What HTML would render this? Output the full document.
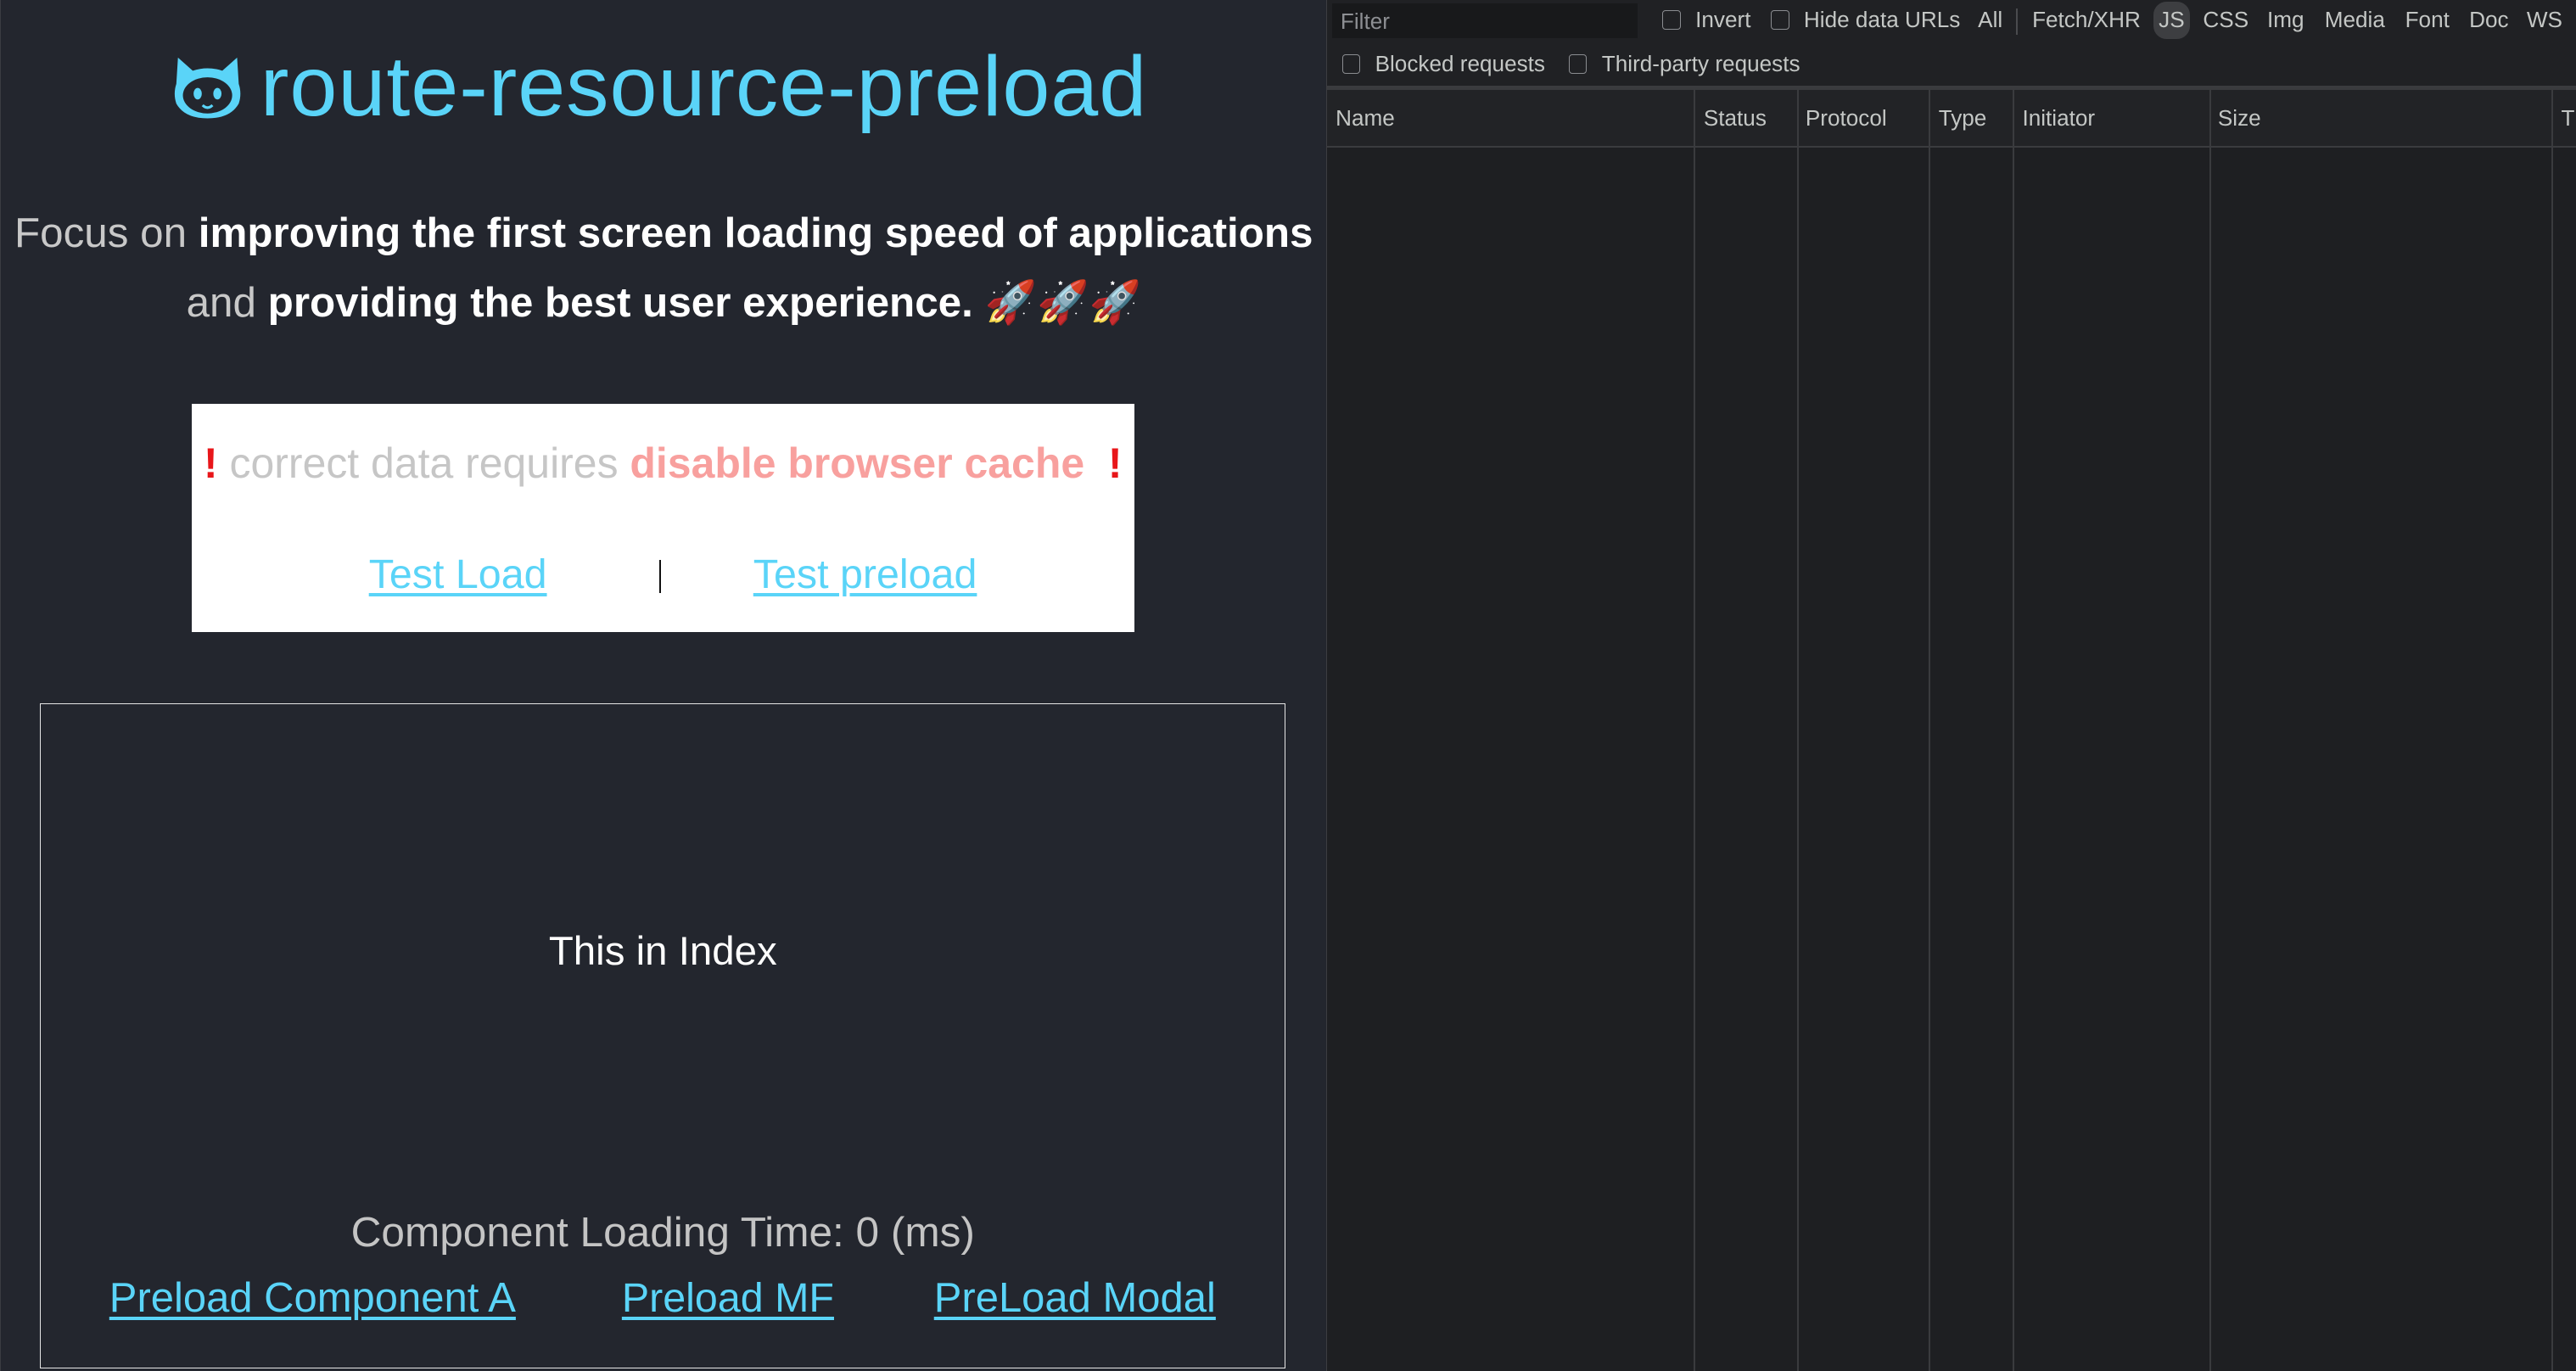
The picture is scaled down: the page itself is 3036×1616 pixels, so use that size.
<!DOCTYPE html>
<html><head><meta charset="utf-8"><style>
html,body{margin:0;padding:0;width:3036px;height:1616px;overflow:hidden;background:#202124}
#z{zoom:1.9362;width:1568px;height:835px;position:relative;font-family:"Liberation Sans",sans-serif}
.a{position:absolute;white-space:nowrap}
#left{position:absolute;left:0;top:0;width:807px;height:835px;background:#23262e;border-left:1px solid #3a3c42;box-sizing:border-box}
#div{position:absolute;left:807px;top:0;width:1px;height:835px;background:#3c3d41}
#right{position:absolute;left:808px;top:0;width:760px;height:835px;background:#202124}
.link{color:#5ad4f8;text-decoration:underline;text-decoration-thickness:2px;text-underline-offset:3px}
.dt{color:#c4c7c5;font-size:13.5px}
.cb{position:absolute;width:10px;height:11px;border:1px solid #8a8c90;border-radius:2px}
.vl{position:absolute;top:55px;width:1px;height:780px;background:#3a3b3e}
</style></head><body><div id="z">
<div id="left">
  <svg class="a" style="left:104px;top:33px" width="45" height="40" viewBox="0 0 45 40">
    <path d="M4 2 L13 10 Q22 7 31 10 L40 2 L41 18 Q43 24 41 30 Q36 39 22 39 Q8 39 3 30 Q1 24 3 18 Z" fill="#5ad4f8"/>
    <ellipse cx="22" cy="25" rx="15" ry="11" fill="#23262e"/>
    <ellipse cx="16" cy="24" rx="2.5" ry="3.5" fill="#5ad4f8"/>
    <ellipse cx="28" cy="24" rx="2.5" ry="3.5" fill="#5ad4f8"/>
    <path d="M19 31 Q22 34 25 31" stroke="#5ad4f8" stroke-width="1.6" fill="none"/>
  </svg>
  <div class="a" style="left:158px;top:23px;font-size:52px;color:#5ad4f8;letter-spacing:0.5px">route-resource-preload</div>
  <div class="a" style="left:0;width:807px;text-align:center;top:121px;font-size:25.5px;line-height:42px;color:#c8c8c8">Focus on <b style="color:#fff">improving the first screen loading speed of applications</b><br>and <b style="color:#fff">providing the best user experience.</b> 🚀🚀🚀</div>
  <div class="a" style="left:116px;top:246px;width:574px;height:139px;background:#fff"></div>
  <div class="a" style="left:116px;width:574px;text-align:center;top:267px;font-size:25.8px;color:#c6c6c6"><span style="color:#e8161a;font-weight:bold">!</span> correct data requires <b style="color:#f8a09e">disable browser cache</b> &nbsp;<span style="color:#e8161a;font-weight:bold">!</span></div>
  <div class="a link" style="left:224px;top:335px;font-size:25px">Test Load</div>
  <div class="a" style="left:401px;top:341px;width:1px;height:20px;background:#111"></div>
  <div class="a link" style="left:458px;top:335px;font-size:25px">Test preload</div>
  <div class="a" style="left:24px;top:428px;width:758px;height:405px;border:1px solid #e6e6e6;box-sizing:border-box"></div>
  <div class="a" style="left:24px;width:758px;text-align:center;top:565px;font-size:24.5px;color:#fff">This in Index</div>
  <div class="a" style="left:24px;width:758px;text-align:center;top:735px;font-size:25.6px;color:#c4c4c4">Component Loading Time: 0 (ms)</div>
  <div class="a link" style="left:66px;top:776px;font-size:25.3px">Preload Component A</div>
  <div class="a link" style="left:378px;top:776px;font-size:25px">Preload MF</div>
  <div class="a link" style="left:568px;top:776px;font-size:25.3px">PreLoad Modal</div>
</div>
<div id="div"></div>
<div id="right">
  <div class="a" style="left:3px;top:2px;width:186px;height:21px;background:#18191b"></div>
  <div class="a dt" style="left:8px;top:5px;color:#8d8f93">Filter</div>
  <div class="cb" style="left:204px;top:6px"></div><div class="a dt" style="left:224px;top:4px">Invert</div>
  <div class="cb" style="left:270px;top:6px"></div><div class="a dt" style="left:290px;top:4px">Hide data URLs</div>
  <div class="a dt" style="left:396px;top:4px">All</div>
  <div class="a" style="left:419px;top:5px;width:1px;height:16px;background:#4a4b4e"></div>
  <div class="a dt" style="left:429px;top:4px">Fetch/XHR</div>
  <div class="a" style="left:503px;top:1px;width:22px;height:23px;border-radius:8px;background:#3d3e41"></div>
  <div class="a dt" style="left:506px;top:4px">JS</div>
  <div class="a dt" style="left:533px;top:4px">CSS</div>
  <div class="a dt" style="left:572px;top:4px">Img</div>
  <div class="a dt" style="left:607px;top:4px">Media</div>
  <div class="a dt" style="left:656px;top:4px">Font</div>
  <div class="a dt" style="left:695px;top:4px">Doc</div>
  <div class="a dt" style="left:730px;top:4px">WS</div>
  <div class="cb" style="left:9px;top:33px"></div><div class="a dt" style="left:29px;top:31px">Blocked requests</div>
  <div class="cb" style="left:147px;top:33px"></div><div class="a dt" style="left:167px;top:31px">Third-party requests</div>
  <div class="a" style="left:0;top:52px;width:760px;height:3px;background:#3a3b3e"></div>
  <div class="a" style="left:0;top:55px;width:760px;height:34px;background:#222326"></div>
  <div class="a" style="left:0;top:89px;width:760px;height:1px;background:#3a3b3e"></div>
  <div class="a" style="left:0;top:90px;width:760px;height:745px;background:#1e1f22"></div>
  <div class="vl" style="left:223px"></div><div class="vl" style="left:286px"></div><div class="vl" style="left:366px"></div><div class="vl" style="left:417px"></div><div class="vl" style="left:537px"></div><div class="vl" style="left:745px"></div>
  <div class="a dt" style="left:5px;top:64px">Name</div>
  <div class="a dt" style="left:229px;top:64px">Status</div>
  <div class="a dt" style="left:291px;top:64px">Protocol</div>
  <div class="a dt" style="left:372px;top:64px">Type</div>
  <div class="a dt" style="left:423px;top:64px">Initiator</div>
  <div class="a dt" style="left:542px;top:64px">Size</div>
  <div class="a dt" style="left:751px;top:64px">T</div>
</div>
</div></body></html>
